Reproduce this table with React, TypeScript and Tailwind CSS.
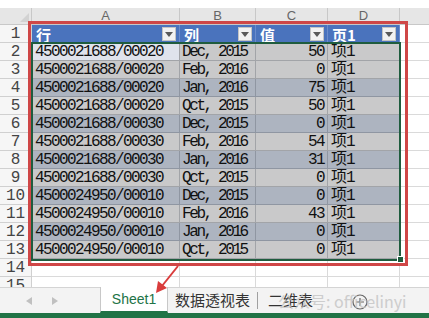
import React from "react";

const mono = { fontFamily: '"Liberation Mono","Noto Sans CJK SC",monospace' };

type Row = { a: string; b: string; c: string; d: string };
const rows: Row[] = [
  { a: "4500021688/00020", b: "Dec, 2015", c: "50", d: "项1" },
  { a: "4500021688/00020", b: "Feb, 2016", c: "0", d: "项1" },
  { a: "4500021688/00020", b: "Jan, 2016", c: "75", d: "项1" },
  { a: "4500021688/00020", b: "Qct, 2015", c: "50", d: "项1" },
  { a: "4500021688/00030", b: "Dec, 2015", c: "0", d: "项1" },
  { a: "4500021688/00030", b: "Feb, 2016", c: "54", d: "项1" },
  { a: "4500021688/00030", b: "Jan, 2016", c: "31", d: "项1" },
  { a: "4500021688/00030", b: "Qct, 2015", c: "0", d: "项1" },
  { a: "4500024950/00010", b: "Dec, 2015", c: "0", d: "项1" },
  { a: "4500024950/00010", b: "Feb, 2016", c: "43", d: "项1" },
  { a: "4500024950/00010", b: "Jan, 2016", c: "0", d: "项1" },
  { a: "4500024950/00010", b: "Qct, 2015", c: "0", d: "项1" },
];

function RowNum({ n, h = "h-[18px]" }: { n: number | string; h?: string }) {
  return (
    <div
      className={`w-[32px] shrink-0 ${h} flex items-center justify-center bg-[#f6f6f6] border-r border-b border-[#d0d0d0] text-[16px] text-[#444] leading-none overflow-hidden`}
      style={mono}
    >
      {n}
    </div>
  );
}

function Drop() {
  return (
    <div className="w-[14px] h-[14px] bg-[#f2f2f2] border border-[#c4c4c4] flex items-center justify-center shrink-0">
      <svg width="8" height="5" viewBox="0 0 8 5">
        <path d="M0 0 L8 0 L4 5 Z" fill="#5a5a5a" />
      </svg>
    </div>
  );
}

function HeadCell({ w, label }: { w: string; label: string }) {
  return (
    <div className={`${w} shrink-0 h-[18px] bg-[#4a73bd] flex items-center justify-between pl-[4px] pr-[3px] border-r border-[#6b8ccc]`}>
      <span className="text-white font-bold text-[15px] leading-none" style={{ fontFamily: '"Noto Sans CJK SC",sans-serif' }}>
        {label}
      </span>
      <Drop />
    </div>
  );
}

export default function App() {
  return (
    <div className="relative w-[429px] h-[318px] bg-white overflow-hidden">
      <div className="h-[8px] bg-white" />
      {/* column header */}
      <div className="flex h-[17px]">
        <div className="w-[32px] shrink-0 bg-[#e6e6e6] border-r border-b border-[#c8c8c8] relative">
          <svg className="absolute right-[2px] bottom-[2px]" width="9" height="9" viewBox="0 0 9 9">
            <path d="M9 0 L9 9 L0 9 Z" fill="#d2d2d2" />
          </svg>
        </div>
        {[
          ["w-[148px]", "A"],
          ["w-[76px]", "B"],
          ["w-[72px]", "C"],
          ["w-[72px]", "D"],
        ].map(([w, l]) => (
          <div
            key={l}
            className={`${w} shrink-0 bg-[#e6e6e6] border-r border-b border-[#c8c8c8] flex items-center justify-center text-[13px] text-[#666]`}
            style={{ fontFamily: '"Liberation Sans",sans-serif' }}
          >
            {l}
          </div>
        ))}
        <div className="flex-1 bg-[#e6e6e6] border-b border-[#c8c8c8]" />
      </div>
      {/* header row 1 */}
      <div className="flex">
        <RowNum n={1} />
        <HeadCell w="w-[148px]" label="行" />
        <HeadCell w="w-[76px]" label="列" />
        <HeadCell w="w-[72px]" label="值" />
        <HeadCell w="w-[72px]" label="页1" />
        <div className="flex-1 h-[18px] border-b border-[#dadada]" />
      </div>
      {rows.map((r, i) => {
        const n = i + 2;
        const dark = n % 2 === 0 && n !== 2;
        const bg = dark ? "bg-[#adb4c0]" : "bg-[#c9c9ca]";
        const line = dark ? "border-[#8f96a2]" : "border-[#a2a4a8]";
        return (
          <div key={n} className="flex">
            <RowNum n={n} />
            <div
              className={`w-[148px] shrink-0 h-[18px] flex items-center pl-[3px] text-[16px] leading-none tracking-[-1.6px] text-[#111] border-b border-r ${line} ${n === 2 ? "bg-[#dfe3ec]" : bg}`}
              style={mono}
            >
              {r.a}
            </div>
            <div
              className={`w-[76px] shrink-0 h-[18px] flex items-center pl-[2px] text-[16px] leading-none tracking-[-2.4px] text-[#111] border-b border-r ${line} ${bg}`}
              style={mono}
            >
              {r.b}
            </div>
            <div
              className={`w-[72px] shrink-0 h-[18px] flex items-center justify-end pr-[3px] text-[16px] leading-none tracking-[-1.6px] text-[#111] border-b border-r ${line} ${bg}`}
              style={mono}
            >
              {r.c}
            </div>
            <div
              className={`w-[72px] shrink-0 h-[18px] flex items-center pl-[3px] text-[16px] leading-none tracking-[-1px] text-[#111] border-b ${line} ${bg}`}
              style={mono}
            >
              {r.d}
            </div>
            <div className="flex-1 h-[18px] border-b border-l border-[#dadada]" />
          </div>
        );
      })}
      {/* rows 14, 15 */}
      {[14, 15].map((n) => (
        <div key={n} className="flex">
          <RowNum n={n} />
          <div className="w-[148px] shrink-0 h-[18px] border-r border-b border-[#dadada]" />
          <div className="w-[76px] shrink-0 h-[18px] border-r border-b border-[#dadada]" />
          <div className="w-[72px] shrink-0 h-[18px] border-r border-b border-[#dadada]" />
          <div className="w-[72px] shrink-0 h-[18px] border-r border-b border-[#dadada]" />
          <div className="flex-1 h-[18px] border-b border-[#dadada]" />
        </div>
      ))}

      {/* tab bar */}
      <div className="absolute left-0 right-0 top-[287px] h-[26px] bg-[#f3f3f3] border-t border-[#d4d4d4] flex items-stretch">
        <div className="w-[100px] shrink-0 flex items-center pl-[26px] gap-[20px]">
          <svg width="6" height="8" viewBox="0 0 6 8"><path d="M6 0 L0 4 L6 8 Z" fill="#c0c0c0" /></svg>
          <svg width="6" height="8" viewBox="0 0 6 8"><path d="M0 0 L6 4 L0 8 Z" fill="#c0c0c0" /></svg>
        </div>
        <div
          className="w-[68px] -mt-[1px] shrink-0 bg-white border-x border-[#c8c8c8] border-b-[2px] border-b-[#217346] flex items-center justify-center text-[14px] text-[#217346]"
          style={{ fontFamily: '"Liberation Sans",sans-serif' }}
        >
          Sheet1
        </div>
        <div
          className="w-[89px] shrink-0 flex items-center justify-center text-[15px] text-[#333]"
          style={{ fontFamily: '"Noto Sans CJK SC",sans-serif' }}
        >
          数据透视表
        </div>
        <div className="w-px bg-[#a0a0a0] my-[4px]" />
        <div
          className="pl-[10px] flex items-center text-[15px] text-[#333]"
          style={{ fontFamily: '"Noto Sans CJK SC",sans-serif' }}
        >
          二维表
        </div>
      </div>
      <div className="absolute left-0 right-0 top-[313px] h-[5px] bg-[#217346]" />

      {/* plus circle */}
      <svg className="absolute left-[352px] top-[294px]" width="16" height="16" viewBox="0 0 16 16">
        <circle cx="8" cy="8" r="7" fill="none" stroke="#666" strokeWidth="1.2" />
        <path d="M8 4 V12 M4 8 H12" stroke="#666" strokeWidth="1.2" />
      </svg>

      {/* watermark */}
      <div
        className="absolute left-[278px] top-[289px] text-[16px] text-[#c4c4c4] opacity-80 whitespace-nowrap"
        style={{ fontFamily: '"Noto Sans CJK SC",sans-serif' }}
      >
        公众号: officelinyi
      </div>

      {/* selection border */}
      <div className="absolute left-[31px] top-[42px] w-[370px] h-[219px] border-2 border-[#1f5c3e]" />
      <div className="absolute left-[397px] top-[256px] w-[7px] h-[7px] bg-[#1f5c3e] border border-white" />

      {/* red highlight box */}
      <div className="absolute left-[28px] top-[21px] w-[380px] h-[245px] border-[3px] border-[#cf4747]" />

      {/* red arrow */}
      <svg className="absolute left-0 top-0" width="429" height="318" viewBox="0 0 429 318">
        <line x1="178" y1="266" x2="162" y2="286" stroke="#d93c3c" strokeWidth="2" />
        <path d="M156 293 L158 281 L167 288 Z" fill="#d93c3c" />
      </svg>
    </div>
  );
}
